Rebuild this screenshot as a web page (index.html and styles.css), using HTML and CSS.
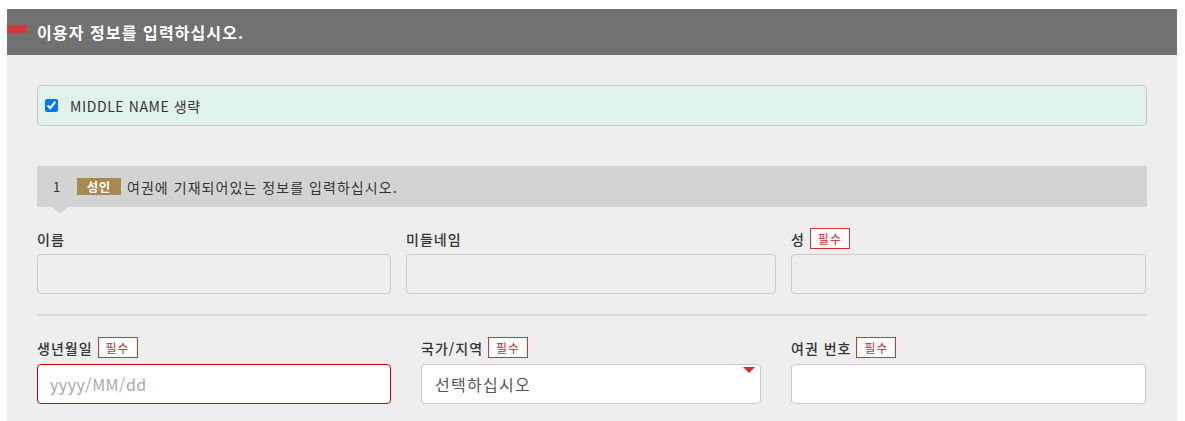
FILE: index.html
```html
<!DOCTYPE html>
<html lang="ko">
<head>
<meta charset="utf-8">
<title>이용자 정보</title>
<link rel="stylesheet" href="styles.css">
</head>
<body>
<div class="panel">
  <div class="panel-head">
    <span class="head-mark"></span>
    <h2 class="head-title">이용자 정보를 입력하십시오.</h2>
  </div>
  <div class="panel-body">
    <label class="notice">
      <input type="checkbox" class="notice-check" checked>
      <span class="notice-text">MIDDLE NAME 생략</span>
    </label>

    <div class="step">
      <span class="step-num">1</span>
      <span class="step-badge">성인</span>
      <span class="step-text">여권에 기재되어있는 정보를 입력하십시오.</span>
    </div>

    <div class="row row-a">
      <div class="field">
        <div class="label">이름</div>
        <div class="box box-disabled"></div>
      </div>
      <div class="field">
        <div class="label">미들네임</div>
        <div class="box box-disabled"></div>
      </div>
      <div class="field">
        <div class="label">성<span class="req">필수</span></div>
        <div class="box box-disabled"></div>
      </div>
    </div>

    <div class="divider"></div>

    <div class="row row-b">
      <div class="field">
        <div class="label">생년월일<span class="req">필수</span></div>
        <div class="box box-error"><span class="placeholder">yyyy/MM/dd</span></div>
      </div>
      <div class="field">
        <div class="label">국가/지역<span class="req">필수</span></div>
        <div class="box box-select"><span class="select-text">선택하십시오</span></div>
      </div>
      <div class="field">
        <div class="label">여권 번호<span class="req">필수</span></div>
        <div class="box"></div>
      </div>
    </div>
  </div>
</div>
</body>
</html>
```

FILE: styles.css
```css
html, body {
  background: #ffffff;
}
body {
  margin: 9px 8px 0 7px;
  font-family: "Noto Sans CJK KR", "Noto Sans", sans-serif;
  color: #333333;
}
.panel {
  width: 1170px;
  background: #eeeeee;
}
.panel-head {
  height: 46px;
  background: #717171;
  display: flex;
  align-items: center;
}
.head-mark {
  align-self: flex-start;
  margin-top: 16px;
  width: 20px;
  height: 8px;
  background: #d23b3b;
}
.head-title {
  margin: 0 0 0 10px;
  font-size: 16px;
  font-weight: bold;
  color: #ffffff;
  line-height: 20px;
  letter-spacing: 1.1px;
}
.panel-body {
  padding: 30px 30px 17px 30px;
}
.notice {
  display: flex;
  align-items: center;
  height: 39px;
  border: 1px solid #cccccc;
  border-radius: 4px;
  background: #dff2eb;
  padding-left: 7px;
}
.notice-check {
  margin: 0;
  width: 13px;
  height: 13px;
  accent-color: #0075ff;
}
.notice-text {
  margin-left: 12px;
  font-size: 14px;
  letter-spacing: 0.6px;
  color: #333333;
}
.step {
  position: relative;
  margin-top: 40px;
  height: 41px;
  background: #d3d3d3;
  display: flex;
  align-items: center;
  padding-left: 16px;
}
.step::after {
  content: "";
  position: absolute;
  left: 15px;
  top: 41px;
  border-left: 8px solid transparent;
  border-right: 8px solid transparent;
  border-top: 7px solid #d3d3d3;
}
.step-num {
  font-size: 13px;
  color: #333333;
  width: 24px;
}
.step-badge {
  display: inline-block;
  width: 44px;
  height: 17px;
  line-height: 17px;
  text-align: center;
  background: #a68a4f;
  color: #ffffff;
  font-size: 12px;
  font-weight: bold;
  letter-spacing: 1px;
}
.step-text {
  margin-left: 6px;
  font-size: 14px;
  letter-spacing: 1.05px;
  color: #333333;
}
.row {
  display: grid;
  grid-template-columns: 354px 1fr 355px;
  margin-right: 1px;
}
.row-a {
  margin-top: 21px;
  column-gap: 15px;
}
.row-b {
  margin-top: 21px;
  column-gap: 30px;
}
.label {
  height: 21px;
  display: flex;
  align-items: center;
  font-size: 14px;
  font-weight: 500;
  letter-spacing: 1px;
  color: #333333;
  margin-bottom: 5px;
}
.row-b .label {
  margin-bottom: 6px;
}
.req {
  display: inline-block;
  box-sizing: border-box;
  margin-left: 5px;
  width: 40px;
  height: 21px;
  line-height: 19px;
  text-align: center;
  border: 1px solid #d63030;
  background: #ffffff;
  color: #d61f1f;
  font-size: 12px;
  font-weight: normal;
  letter-spacing: 1px;
}
.box {
  position: relative;
  box-sizing: border-box;
  height: 40px;
  border: 1px solid #cccccc;
  border-radius: 4px;
  background: #ffffff;
  display: flex;
  align-items: center;
}
.box-disabled {
  background: #eeeeee;
}
.box-error {
  border-color: #d90000;
}
.placeholder {
  margin-left: 12px;
  font-size: 16px;
  letter-spacing: 0.5px;
  color: #aaaaaa;
}
.select-text {
  margin-left: 13px;
  font-size: 16px;
  letter-spacing: 1.3px;
  color: #555555;
}
.box-select::after {
  content: "";
  position: absolute;
  right: 5px;
  top: 2px;
  border-left: 6px solid transparent;
  border-right: 6px solid transparent;
  border-top: 6px solid #d63030;
}
.divider {
  margin-top: 20px;
  height: 2px;
  background: #dadada;
}
```
